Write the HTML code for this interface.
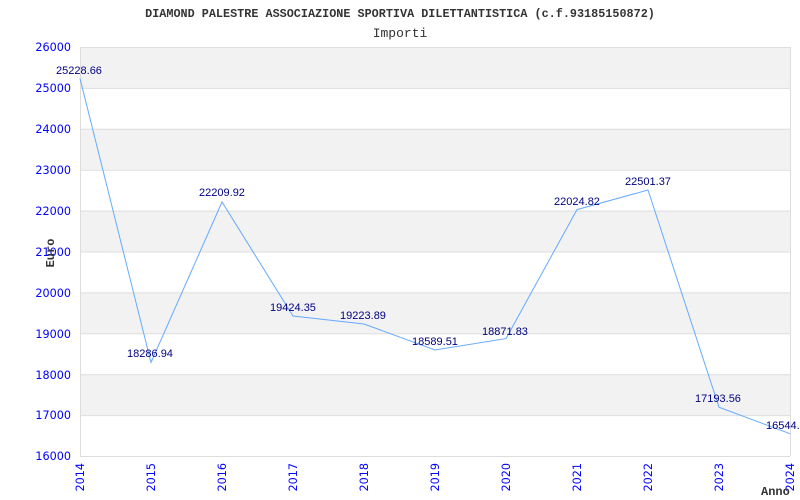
<!DOCTYPE html>
<html><head><meta charset="utf-8"><style>
html,body{margin:0;padding:0;background:#fff;width:800px;height:500px;overflow:hidden}
</style></head><body>
<svg width="800" height="500" xmlns="http://www.w3.org/2000/svg" font-family="DejaVu Sans, Liberation Sans, sans-serif">
<text x="400" y="17" text-anchor="middle" font-family="Liberation Mono, monospace" font-weight="bold" font-size="11.8" fill="#333">DIAMOND PALESTRE ASSOCIAZIONE SPORTIVA DILETTANTISTICA (c.f.93185150872)</text>
<text x="400" y="37" text-anchor="middle" font-family="Liberation Mono, monospace" font-size="13" fill="#333">Importi</text>
<g fill="#f2f2f2">
<rect x="80" y="47" width="710" height="40.9"/>
<rect x="80" y="128.8" width="710" height="40.9"/>
<rect x="80" y="210.6" width="710" height="40.9"/>
<rect x="80" y="292.4" width="710" height="40.9"/>
<rect x="80" y="374.2" width="710" height="40.9"/>
</g>
<g stroke="#ddd" stroke-width="1">
<line x1="80" y1="47.5" x2="790" y2="47.5"/><line x1="80" y1="88.4" x2="790" y2="88.4"/><line x1="80" y1="129.3" x2="790" y2="129.3"/><line x1="80" y1="170.2" x2="790" y2="170.2"/><line x1="80" y1="211.1" x2="790" y2="211.1"/><line x1="80" y1="252" x2="790" y2="252"/><line x1="80" y1="292.9" x2="790" y2="292.9"/><line x1="80" y1="333.8" x2="790" y2="333.8"/><line x1="80" y1="374.7" x2="790" y2="374.7"/><line x1="80" y1="415.6" x2="790" y2="415.6"/><line x1="80" y1="456.5" x2="790" y2="456.5"/>
<line x1="80.5" y1="47" x2="80.5" y2="456"/><line x1="790.5" y1="47" x2="790.5" y2="456"/>
</g>
<g fill="#0000ff" font-size="11.2" text-anchor="end">
<text x="71" y="51">26000</text><text x="71" y="92">25000</text><text x="71" y="133">24000</text><text x="71" y="174">23000</text><text x="71" y="215">22000</text><text x="71" y="256">21000</text><text x="71" y="297">20000</text><text x="71" y="338">19000</text><text x="71" y="379">18000</text><text x="71" y="419">17000</text><text x="71" y="460">16000</text>
</g>
<g fill="#0000ff" font-size="11.2" text-anchor="end">
<text transform="translate(84,463) rotate(-90)">2014</text>
<text transform="translate(155,463) rotate(-90)">2015</text>
<text transform="translate(226,463) rotate(-90)">2016</text>
<text transform="translate(297,463) rotate(-90)">2017</text>
<text transform="translate(368,463) rotate(-90)">2018</text>
<text transform="translate(439,463) rotate(-90)">2019</text>
<text transform="translate(510,463) rotate(-90)">2020</text>
<text transform="translate(581,463) rotate(-90)">2021</text>
<text transform="translate(652,463) rotate(-90)">2022</text>
<text transform="translate(723,463) rotate(-90)">2023</text>
<text transform="translate(794,463) rotate(-90)">2024</text>
</g>
<text transform="translate(54,253) rotate(-90)" text-anchor="middle" font-family="Liberation Mono, monospace" font-weight="bold" font-size="12" fill="#333">Euro</text>
<text x="761" y="495" font-family="Liberation Mono, monospace" font-weight="bold" font-size="12" fill="#333">Anno</text>
<polyline fill="none" stroke="#66aaff" stroke-width="1" points="80,78.5 151,362.5 222,202 293,316 364,324 435,350 506,338.6 577,209.6 648,190 719,407.2 790,433.7"/>
<g fill="#000080" font-family="Liberation Sans, Arial, sans-serif" font-size="11" text-anchor="middle">
<text x="79" y="74">25228.66</text>
<text x="150" y="357">18286.94</text>
<text x="222" y="196">22209.92</text>
<text x="293" y="311">19424.35</text>
<text x="363" y="319">19223.89</text>
<text x="435" y="345">18589.51</text>
<text x="505" y="335">18871.83</text>
<text x="577" y="205">22024.82</text>
<text x="648" y="185">22501.37</text>
<text x="718" y="402">17193.56</text>
<text x="789" y="429">16544.12</text>
</g>
</svg>
</body></html>
